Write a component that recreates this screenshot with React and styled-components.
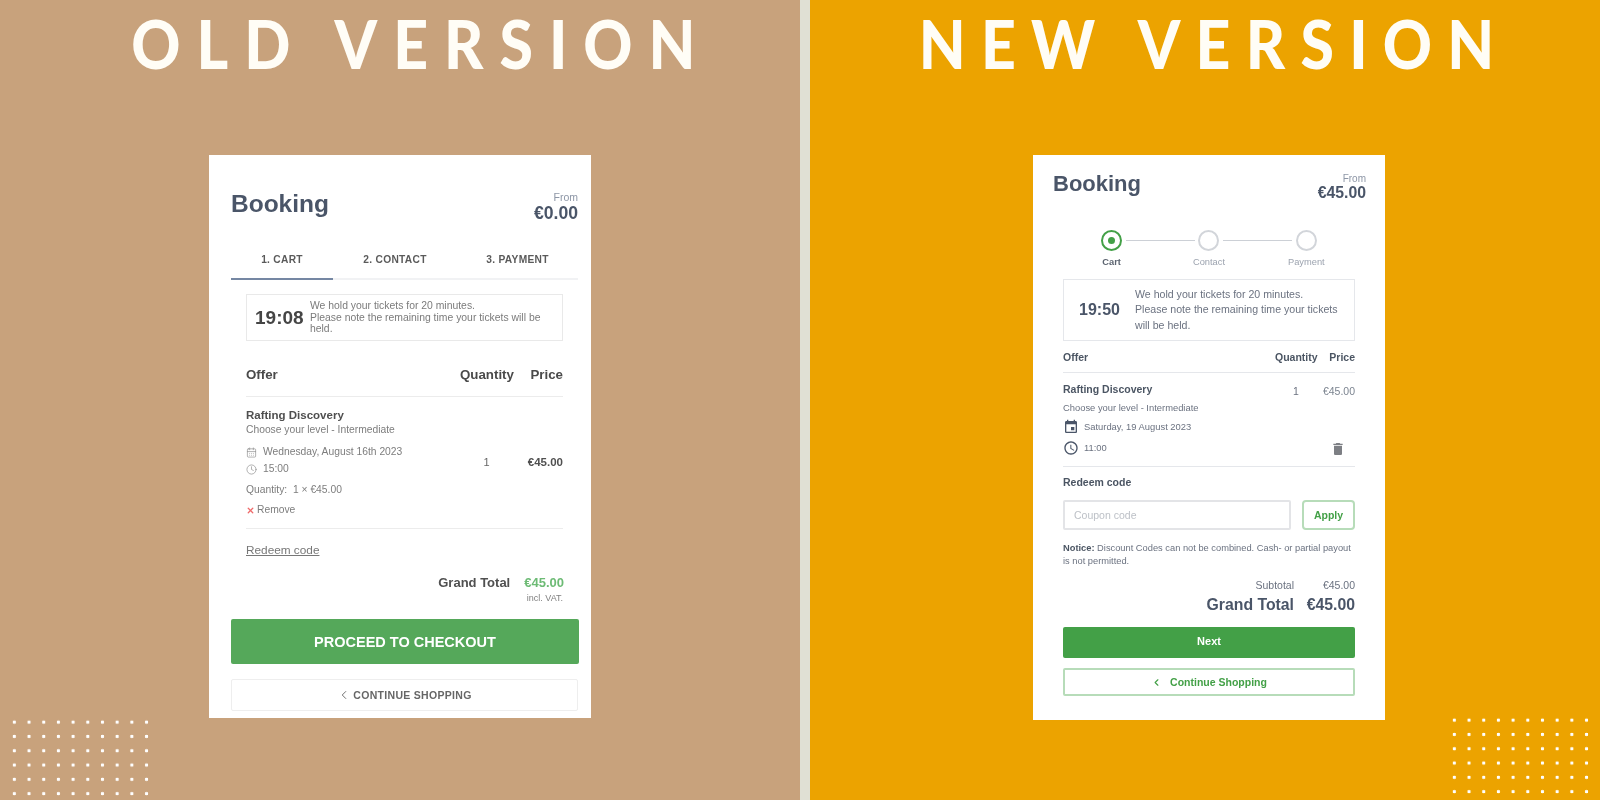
import React from "react";
import styled, { createGlobalStyle } from "styled-components";
import { MdAccessTime, MdDelete, MdEvent } from "react-icons/md";
import { CalendarDays, ChevronLeft, Clock, X } from "lucide-react";

const GlobalStyle = createGlobalStyle`
  html, body {
    margin: 0;
    padding: 0;
    overflow: hidden;
  }
  body {
    font-family: "Liberation Sans", Arial, sans-serif;
  }
  * {
    box-sizing: border-box;
  }
`;

const Page = styled.div`
  display: grid;
  grid-template-columns: 800px 790px;
  column-gap: 10px;
  width: 1600px;
  height: 800px;
  background: #e0e0d4;
`;

const Panel = styled.section`
  position: relative;
  display: flex;
  flex-direction: column;
  align-items: center;
  height: 800px;
  overflow: hidden;
  background: ${(p) => p.$bg};
`;

const Title = styled.h1`
  margin: 0 0 68px ${(p) => p.$shift}px;
  height: 87px;
  font-family: "Lato", sans-serif;
  font-weight: 900;
  font-size: 66px;
  line-height: 87px;
  letter-spacing: ${(p) => p.$spacing}px;
  color: #fffdf6;
  white-space: nowrap;
  transform: scaleX(0.92);
`;

const Dots = styled.div`
  position: absolute;
  width: 147px;
  height: 86px;
  top: ${(p) => p.$top}px;
  ${(p) => (p.$right ? `right: ${p.$right}px;` : `left: ${p.$left}px;`)}
  background-image: radial-gradient(circle at center, #fff 1.4px, transparent 2px);
  background-size: 14.7px 14.3px;
`;

/* old version card */

const OldCard = styled.div`
  width: 382px;
  height: 563px;
  padding: 34px 13px 7px 22px;
  background: #fff;
  filter: blur(0.5px);
`;

const Header = styled.div`
  display: flex;
  justify-content: space-between;
  align-items: flex-start;
`;

const Heading = styled.div`
  font-weight: 700;
  font-size: ${(p) => p.$size}px;
  line-height: ${(p) => p.$line}px;
  color: #4a5568;
`;

const FromBlock = styled.div`
  text-align: right;
  margin-top: ${(p) => p.$top || 0}px;
`;

const FromLabel = styled.div`
  font-size: ${(p) => p.$size}px;
  line-height: ${(p) => p.$line}px;
  color: #8d96a6;
`;

const FromPrice = styled.div`
  font-weight: 700;
  font-size: ${(p) => p.$size}px;
  line-height: ${(p) => p.$line}px;
  color: #4a5568;
`;

const Tabs = styled.div`
  display: grid;
  grid-template-columns: 102px 124px 121px;
`;

const Tab = styled.div`
  padding: 31px 0 11px;
  text-align: center;
  font-weight: 700;
  font-size: 10.2px;
  line-height: 14px;
  letter-spacing: 0.3px;
  color: #5a5a5a;
  border-bottom: 2px solid ${(p) => (p.$active ? "#7587a3" : "#f1f2f4")};
`;

const OldInner = styled.div`
  width: 317px;
  margin-left: 15px;
`;

const OldTimer = styled.div`
  display: flex;
  align-items: center;
  height: 47px;
  margin-top: 14px;
  padding: 0 8px;
  border: 1px solid #e9e9e9;
`;

const OldClock = styled.div`
  flex: none;
  width: 55px;
  font-weight: 700;
  font-size: 19px;
  color: #454545;
`;

const OldHold = styled.div`
  font-size: 10.4px;
  line-height: 11.8px;
  color: #7b7b7b;
`;

const OldTable = styled.div`
  display: grid;
  grid-template-columns: 1fr 53px 50px;
  align-items: ${(p) => p.$align || "center"};
  margin-top: ${(p) => p.$top || 0}px;
  padding-top: ${(p) => p.$pt || 0}px;
  padding-bottom: ${(p) => p.$pb || 0}px;
  border-bottom: 1px solid #ececec;
`;

const OldHead = styled.div`
  font-weight: 700;
  font-size: 13.3px;
  line-height: 24px;
  color: #4a4a4a;
  text-align: ${(p) => p.$align || "left"};
`;

const OldName = styled.div`
  font-weight: 700;
  font-size: 11.5px;
  line-height: 16px;
  color: #4f4f4f;
`;

const OldMeta = styled.div`
  display: flex;
  align-items: center;
  gap: ${(p) => p.$gap || 0}px;
  margin-top: ${(p) => p.$top || 0}px;
  font-size: 10.3px;
  line-height: 14px;
  color: #7d7d7d;
  svg {
    flex: none;
  }
`;

const OldQty = styled.div`
  font-size: 11px;
  text-align: center;
  color: #666;
`;

const OldPrice = styled.div`
  font-weight: 700;
  font-size: 11.5px;
  text-align: right;
  color: #505050;
`;

const RedeemLink = styled.a`
  display: block;
  margin-top: 13px;
  font-size: 11.8px;
  line-height: 16px;
  color: #777;
  text-decoration: underline;
`;

const OldTotal = styled.div`
  display: flex;
  justify-content: flex-end;
  gap: 14px;
  margin: 17px -1px 0 0;
  font-weight: 700;
  font-size: 13px;
  line-height: 16px;
  color: #505050;
`;

const OldTotalPrice = styled.span`
  color: #6dbb75;
`;

const VatNote = styled.div`
  margin-top: 1px;
  font-size: 9px;
  line-height: 12px;
  text-align: right;
  color: #808080;
`;

const CheckoutButton = styled.button`
  display: block;
  width: 348px;
  height: 45px;
  margin-top: 15px;
  border: 0;
  border-radius: 2px;
  background: #55a85a;
  color: #fff;
  font: 700 14.5px "Liberation Sans", Arial, sans-serif;
`;

const OldBackButton = styled.button`
  display: flex;
  align-items: center;
  justify-content: center;
  gap: 2px;
  width: 347px;
  height: 32px;
  margin-top: 15px;
  padding-right: 6px;
  border: 1px solid #eeeeee;
  border-radius: 2px;
  background: #fff;
  color: #666;
  font: 700 10.5px "Liberation Sans", Arial, sans-serif;
  letter-spacing: 0.3px;
`;

/* new version card */

const NewCard = styled.div`
  width: 352px;
  height: 565px;
  margin-left: 8px;
  padding: 15px 19px 23px 20px;
  background: #fff;
  filter: blur(0.5px);
`;

const NewInner = styled.div`
  width: 292px;
  margin-left: 10px;
`;

const Stepper = styled.div`
  display: grid;
  grid-template-columns: repeat(3, 1fr);
  margin-top: 29px;
`;

const Step = styled.div`
  position: relative;
  display: flex;
  flex-direction: column;
  align-items: center;
  & + &::before {
    content: "";
    position: absolute;
    top: 10px;
    left: calc(-50% + 14px);
    right: calc(50% + 14px);
    height: 1px;
    background: #ccd0d6;
  }
`;

const StepDot = styled.div`
  display: flex;
  align-items: center;
  justify-content: center;
  width: 21px;
  height: 21px;
  border-radius: 50%;
  border: 2px solid ${(p) => (p.$active ? "#43a047" : "#d2d5da")};
  &::after {
    content: "";
    display: ${(p) => (p.$active ? "block" : "none")};
    width: 7px;
    height: 7px;
    border-radius: 50%;
    background: #43a047;
  }
`;

const StepLabel = styled.div`
  margin-top: 5px;
  font-size: 9.3px;
  line-height: 12px;
  font-weight: ${(p) => (p.$active ? 700 : 400)};
  color: ${(p) => (p.$active ? "#5c6470" : "#9ca3af")};
`;

const NewTimer = styled.div`
  display: flex;
  align-items: center;
  height: 62px;
  margin-top: 11px;
  padding-left: 15px;
  border: 1px solid #e5e7eb;
`;

const NewClock = styled.div`
  flex: none;
  width: 56px;
  font-weight: 700;
  font-size: 16px;
  color: #4a5568;
`;

const NewHold = styled.div`
  font-size: 10.6px;
  line-height: 15.5px;
  color: #6b7280;
`;

const NewTable = styled.div`
  display: grid;
  grid-template-columns: 1fr 42px 38px;
  margin-top: ${(p) => p.$top || 0}px;
  padding-top: ${(p) => p.$pt || 0}px;
  padding-bottom: ${(p) => p.$pb}px;
  border-bottom: 1px solid #e5e7eb;
`;

const NewHead = styled.div`
  font-weight: 700;
  font-size: 10.5px;
  line-height: 14px;
  color: #4b5563;
  text-align: ${(p) => p.$align || "left"};
  white-space: nowrap;
`;

const NewName = styled.div`
  font-weight: 700;
  font-size: 10.5px;
  line-height: 14px;
  color: #4b5563;
`;

const NewMeta = styled.div`
  display: flex;
  align-items: center;
  gap: 5px;
  margin-top: ${(p) => p.$top}px;
  font-size: 9.4px;
  line-height: ${(p) => p.$line || 14}px;
  color: #6b7280;
  svg {
    flex: none;
    margin: -1px 0;
    color: #4a5568;
  }
`;

const NewQty = styled.div`
  padding-top: 2px;
  font-size: 10.5px;
  line-height: 14px;
  text-align: center;
  color: #6b7280;
`;

const NewPriceCol = styled.div`
  display: flex;
  flex-direction: column;
  align-items: flex-end;
  justify-content: space-between;
  padding-top: 2px;
  font-size: 10.5px;
  line-height: 14px;
  color: #7c8490;
  svg {
    margin: 0 9px -2px 0;
    color: #7d7f84;
  }
`;

const RedeemTitle = styled.div`
  margin-top: 8px;
  font-weight: 700;
  font-size: 10.5px;
  line-height: 14px;
  color: #4b5563;
`;

const CouponRow = styled.div`
  display: flex;
  gap: 11px;
  height: 30px;
  margin-top: 11px;
`;

const CouponInput = styled.input`
  flex: 1;
  min-width: 0;
  padding: 0 9px;
  border: 2px solid #e3e4e7;
  border-radius: 2px;
  outline: none;
  font: 400 10.5px "Liberation Sans", Arial, sans-serif;
  &::placeholder {
    color: #bdc1c7;
    opacity: 1;
  }
`;

const ApplyButton = styled.button`
  flex: none;
  width: 53px;
  border: 2px solid #b7dcb9;
  border-radius: 4px;
  background: #fff;
  color: #43a047;
  font: 700 10.5px "Liberation Sans", Arial, sans-serif;
`;

const Notice = styled.p`
  margin: 12px 0 0;
  font-size: 9.3px;
  line-height: 13px;
  color: #6b7280;
  strong {
    color: #4b5563;
  }
`;

const SummaryRow = styled.div`
  display: flex;
  justify-content: flex-end;
  margin-top: ${(p) => p.$top}px;
  font-weight: ${(p) => (p.$big ? 700 : 400)};
  font-size: ${(p) => (p.$big ? 15.8 : 10.5)}px;
  line-height: ${(p) => (p.$big ? 20 : 14)}px;
  color: ${(p) => (p.$big ? "#4a5568" : "#6b7280")};
`;

const SummaryValue = styled.span`
  width: 61px;
  text-align: right;
`;

const NextButton = styled.button`
  display: block;
  width: 100%;
  height: 31px;
  margin-top: 12px;
  padding: 0 0 3px;
  border: 0;
  border-radius: 2px;
  background: #43a047;
  color: #fff;
  font: 700 11px "Liberation Sans", Arial, sans-serif;
`;

const NewBackButton = styled.button`
  display: flex;
  align-items: center;
  justify-content: center;
  gap: 8px;
  width: 100%;
  height: 28px;
  margin-top: 10px;
  border: 2px solid #b7dcb9;
  border-radius: 2px;
  background: #fff;
  color: #43a047;
  font: 700 10.5px "Liberation Sans", Arial, sans-serif;
`;

function OldVersion() {
  return (
    <Panel $bg="#c8a27c">
      <Title $shift={42} $spacing={17.4}>OLD VERSION</Title>
      <Dots $left={7} $top={715} />
      <OldCard>
        <Header>
          <Heading $size={24.5} $line={30}>Booking</Heading>
          <FromBlock $top={1}>
            <FromLabel $size={10.5} $line={14}>From</FromLabel>
            <FromPrice $size={17.6} $line={18}>€0.00</FromPrice>
          </FromBlock>
        </Header>
        <Tabs>
          <Tab $active>1. CART</Tab>
          <Tab>2. CONTACT</Tab>
          <Tab>3. PAYMENT</Tab>
        </Tabs>
        <OldInner>
          <OldTimer>
            <OldClock>19:08</OldClock>
            <OldHold>
              We hold your tickets for 20 minutes.
              <br />
              Please note the remaining time your tickets will be held.
            </OldHold>
          </OldTimer>
          <OldTable $top={22} $pb={9}>
            <OldHead>Offer</OldHead>
            <OldHead $align="center">Quantity</OldHead>
            <OldHead $align="right">Price</OldHead>
          </OldTable>
          <OldTable $pt={10} $pb={11}>
            <div>
              <OldName>Rafting Discovery</OldName>
              <OldMeta>Choose your level - Intermediate</OldMeta>
              <OldMeta $top={8} $gap={6}>
                <CalendarDays size={11} strokeWidth={1.5} color="#8f8f8f" />
                Wednesday, August 16th 2023
              </OldMeta>
              <OldMeta $top={3} $gap={6}>
                <Clock size={11} strokeWidth={1.5} color="#8f8f8f" />
                15:00
              </OldMeta>
              <OldMeta $top={7}>Quantity:&nbsp; 1 × €45.00</OldMeta>
              <OldMeta $top={6} $gap={2}>
                <X size={9} strokeWidth={3.5} color="#ef6a6a" />
                Remove
              </OldMeta>
            </div>
            <OldQty>1</OldQty>
            <OldPrice>€45.00</OldPrice>
          </OldTable>
          <RedeemLink>Redeem code</RedeemLink>
          <OldTotal>
            Grand Total
            <OldTotalPrice>€45.00</OldTotalPrice>
          </OldTotal>
          <VatNote>incl. VAT.</VatNote>
        </OldInner>
        <CheckoutButton>PROCEED TO CHECKOUT</CheckoutButton>
        <OldBackButton>
          <ChevronLeft size={14} strokeWidth={1.6} />
          CONTINUE SHOPPING
        </OldBackButton>
      </OldCard>
    </Panel>
  );
}

function NewVersion() {
  return (
    <Panel $bg="#eca300">
      <Title $shift={18} $spacing={16.6}>NEW VERSION</Title>
      <Dots $right={6} $top={713} />
      <NewCard>
        <Header>
          <Heading $size={22} $line={28}>Booking</Heading>
          <FromBlock $top={3}>
            <FromLabel $size={10} $line={12}>From</FromLabel>
            <FromPrice $size={15.8} $line={16}>€45.00</FromPrice>
          </FromBlock>
        </Header>
        <NewInner>
          <Stepper>
            <Step>
              <StepDot $active />
              <StepLabel $active>Cart</StepLabel>
            </Step>
            <Step>
              <StepDot />
              <StepLabel>Contact</StepLabel>
            </Step>
            <Step>
              <StepDot />
              <StepLabel>Payment</StepLabel>
            </Step>
          </Stepper>
          <NewTimer>
            <NewClock>19:50</NewClock>
            <NewHold>
              We hold your tickets for 20 minutes.
              <br />
              Please note the remaining time your tickets will be held.
            </NewHold>
          </NewTimer>
          <NewTable $top={9} $pb={8}>
            <NewHead>Offer</NewHead>
            <NewHead $align="center">Quantity</NewHead>
            <NewHead $align="right">Price</NewHead>
          </NewTable>
          <NewTable $pt={9} $pb={11}>
            <div>
              <NewName>Rafting Discovery</NewName>
              <NewMeta $top={6} $line={12}>Choose your level - Intermediate</NewMeta>
              <NewMeta $top={6}>
                <MdEvent size={16} />
                Saturday, 19 August 2023
              </NewMeta>
              <NewMeta $top={7}>
                <MdAccessTime size={16} />
                11:00
              </NewMeta>
            </div>
            <NewQty>1</NewQty>
            <NewPriceCol>
              €45.00
              <MdDelete size={16} />
            </NewPriceCol>
          </NewTable>
          <RedeemTitle>Redeem code</RedeemTitle>
          <CouponRow>
            <CouponInput placeholder="Coupon code" readOnly />
            <ApplyButton>Apply</ApplyButton>
          </CouponRow>
          <Notice>
            <strong>Notice:</strong> Discount Codes can not be combined. Cash- or partial payout is not permitted.
          </Notice>
          <SummaryRow $top={10}>
            Subtotal
            <SummaryValue>€45.00</SummaryValue>
          </SummaryRow>
          <SummaryRow $top={3} $big>
            Grand Total
            <SummaryValue>€45.00</SummaryValue>
          </SummaryRow>
          <NextButton>Next</NextButton>
          <NewBackButton>
            <ChevronLeft size={11} strokeWidth={2.5} />
            Continue Shopping
          </NewBackButton>
        </NewInner>
      </NewCard>
    </Panel>
  );
}

export default function App() {
  return (
    <>
      <GlobalStyle />
      <Page>
        <OldVersion />
        <NewVersion />
      </Page>
    </>
  );
}
